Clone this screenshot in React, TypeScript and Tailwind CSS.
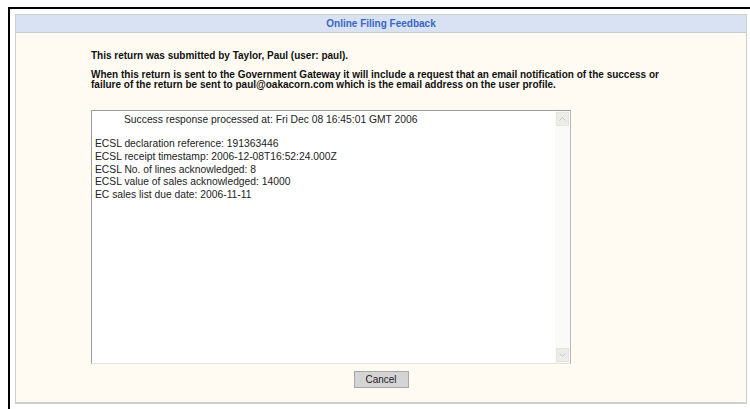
import React from 'react';

const responseLines = [
  'ECSL declaration reference: 191363446',
  'ECSL receipt timestamp: 2006-12-08T16:52:24.000Z',
  'ECSL No. of lines acknowledged: 8',
  'ECSL value of sales acknowledged: 14000',
  'EC sales list due date: 2006-11-11',
];

const ScrollArrow: React.FC<{ up?: boolean }> = ({ up }) => (
  <div className="flex h-[14px] w-[13px] items-center justify-center border border-[#e4e4e0] bg-[#ecece8]">
    <svg width="7" height="4" viewBox="0 0 7 4">
      <path d={up ? 'M0.5 3.5 L3.5 0.5 L6.5 3.5' : 'M0.5 0.5 L3.5 3.5 L6.5 0.5'} fill="none" stroke="#c4c4c0" strokeWidth="1" />
    </svg>
  </div>
);

export default function App() {
  return (
    <div className="h-[409px] w-[750px] overflow-hidden bg-white pl-[8px] pt-[7px]" style={{ fontFamily: '"Liberation Sans", Arial, sans-serif' }}>
      <div className="h-full border-l-2 border-t-2 border-black pl-[5px] pt-[5px]">
        <div className="flex h-[390px] w-[732px] flex-col border border-b-2 border-[#cfcfcb] bg-[#fffbf3]">
          <div className="flex h-[18px] items-center justify-center border-b border-[#c4ccd8] bg-[#d8e2f3] text-[10px] font-bold text-[#3a66c4]">
            Online Filing Feedback
          </div>

          <div className="flex flex-1 flex-col pl-[75px] pt-[18px] text-[10px] font-bold leading-[10.5px] text-[#111]">
            <p>This return was submitted by Taylor, Paul (user: paul).</p>
            <p className="mt-[8px] w-[580px]">
              When this return is sent to the Government Gateway it will include a request that an email notification of the success or failure of the return be sent to paul@oakacorn.com which is the email address on the user profile.
            </p>

            <div className="mt-[19px] flex h-[254px] w-[480px] border border-b-[#e2e2e0] border-l-[#9c9c9c] border-r-[#b8b8b8] border-t-[#9c9c9c] bg-white font-normal">
              <div className="flex-1 pl-[3px] pt-[3px] text-[10.3px] leading-[12.7px] text-[#222]">
                <div className="pl-[29px]">Success response processed at: Fri Dec 08 16:45:01 GMT 2006</div>
                <div className="h-[12px]" />
                {responseLines.map((line) => (
                  <div key={line}>{line}</div>
                ))}
              </div>
              <div className="flex w-[15px] flex-col justify-between bg-[#fafaf8] p-[1px]">
                <ScrollArrow up />
                <ScrollArrow />
              </div>
            </div>
          </div>

          <div className="flex justify-center pb-[14px]">
            <button className="h-[17px] w-[55px] border border-[#a8a8a8] bg-[#d4d4d4] text-[10px] leading-none text-[#222]">
              Cancel
            </button>
          </div>
        </div>
      </div>
    </div>
  );
}
